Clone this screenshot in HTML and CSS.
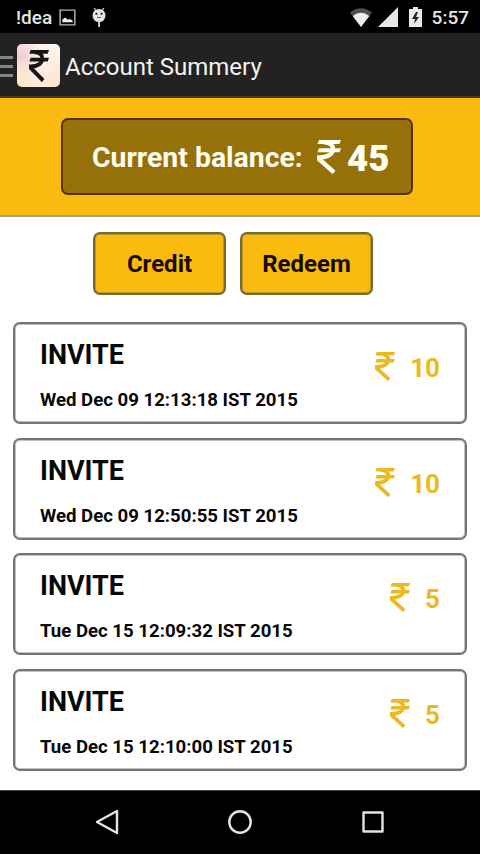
FILE: index.html
```html
<!DOCTYPE html>
<html lang="en">
<head>
<meta charset="utf-8">
<title>Account Summery</title>
<link rel="stylesheet" href="styles.css">
</head>
<body>
<svg class="defs" aria-hidden="true">
  <symbol id="rupee" viewBox="0 0 24 34" preserveAspectRatio="none">
    <path d="M2 0H24L22.5 4H0.5ZM2 8.3H24L22.5 12.3H0.5Z"/>
    <path d="M6 2C20 2 20 17.5 2 17.5V19L17 32.5" fill="none" stroke="currentColor" stroke-width="4.4"/>
  </symbol>
</svg>
<div class="screen">
  <div class="status">
    <span class="carrier">!dea</span>
    <svg class="photo" viewBox="0 0 18 18"><path d="M1.2 1.2h15.6v15.6H1.2z" fill="none" stroke="#b5b5b5" stroke-width="1.5"/><path d="M3.5 14V11l3-2 3 2.5 2-1 3 2V14z" fill="#eee"/></svg>
    <svg class="bug" viewBox="0 0 16 22"><path d="M3 1l2 3M13 1l-2 3" stroke="#ddd" stroke-width="1.2"/><ellipse cx="8" cy="9" rx="6.8" ry="7" fill="#e4e4e4"/><path d="M7.2 15h1.8v6H7.2z" fill="#ddd"/><circle cx="5.3" cy="7" r="1.1"/><circle cx="10.7" cy="7" r="1.1"/><path d="M6 11h4" stroke="#555"/></svg>
    <span class="spacer"></span>
    <svg class="wifi" viewBox="0 0 22 19"><path d="M0 4.5Q11-4 22 4.5L11 19Z" fill="#505050"/><path d="M2.7 8Q11 1.5 19.3 8L11 19Z" fill="#eee"/></svg>
    <svg class="signal" viewBox="0 0 20 20"><path d="M20 0V20H0Z" fill="#e8e8e8"/></svg>
    <svg class="battery" viewBox="0 0 13 20"><path d="M4 0h5v2h4v18H0V2h4z" fill="#e8e8e8"/><path d="M7 5L3 12h3l-1 5 5-7H7l2-5z" fill="#222"/></svg>
    <span class="time">5:57</span>
  </div>
  <header class="bar">
    <div class="menu"><i></i><i></i><i></i></div>
    <div class="logo"><svg><use href="#rupee"/></svg></div>
    <h1>Account Summery</h1>
  </header>
  <section class="hero">
    <div class="balance"><span>Current balance:</span><svg><use href="#rupee"/></svg><strong>45</strong></div>
  </section>
  <div class="actions"><button>Credit</button><button>Redeem</button></div>
  <main class="list">
    <article class="card"><div><h2>INVITE</h2><p>Wed Dec 09 12:13:18 IST 2015</p></div><div class="amount"><svg><use href="#rupee"/></svg><span>10</span></div></article>
    <article class="card"><div><h2>INVITE</h2><p>Wed Dec 09 12:50:55 IST 2015</p></div><div class="amount"><svg><use href="#rupee"/></svg><span>10</span></div></article>
    <article class="card"><div><h2>INVITE</h2><p>Tue Dec 15 12:09:32 IST 2015</p></div><div class="amount"><svg><use href="#rupee"/></svg><span>5</span></div></article>
    <article class="card"><div><h2>INVITE</h2><p>Tue Dec 15 12:10:00 IST 2015</p></div><div class="amount"><svg><use href="#rupee"/></svg><span>5</span></div></article>
  </main>
  <nav class="nav">
    <svg viewBox="0 0 26 26"><path d="M23 2v22L3 13z"/></svg>
    <svg viewBox="0 0 26 26"><circle cx="13" cy="13" r="10.7"/></svg>
    <svg viewBox="0 0 26 26"><path d="M3.5 3.5h19v19h-19z"/></svg>
  </nav>
</div>
</body>
</html>
```
FILE: styles.css
```css
* { box-sizing: border-box; margin: 0; padding: 0; }
body { font-family: Roboto, "Liberation Sans", sans-serif; background: #fff; }
svg { display: block; flex: none; fill: currentColor; }
.defs { display: none; }
.screen { width: 480px; height: 854px; display: flex; flex-direction: column; overflow: hidden; }
.status { height: 33px; flex: none; background: #000; color: #e4e4e4; display: flex; align-items: center; padding: 1px 11px 0 16px; font-size: 19px; }
.carrier { width: 43px; font-weight: 500; }
.status svg { color: #000; }
.photo { width: 17px; height: 17px; }
.bug { width: 16px; height: 21px; margin-left: 15px; }
.spacer { flex: 1; }
.wifi { width: 22px; height: 19px; }
.signal { width: 20px; height: 20px; margin-left: 6px; }
.battery { width: 13px; height: 20px; margin: 0 10px 0 11px; }
.time { font-weight: 500; }
.bar { height: 65px; flex: none; background: #222; border-bottom: 2px solid #503710; display: flex; align-items: center; padding-top: 2px; color: #f2f2f2; }
.menu { width: 13px; display: grid; gap: 6px; margin: 2px 4px 0 0; }
.menu i { height: 3px; background: #858585; }
.logo { width: 43px; height: 43px; border-radius: 5px; background: radial-gradient(circle at 10% 85%, #ffe5c8, transparent 45%), radial-gradient(circle at 5% 30%, #f0c9d0, transparent 50%), radial-gradient(circle at 100% 100%, #ffe0cc, #fff5ef 65%); color: #161616; display: grid; place-items: center; }
.logo svg { width: 20px; height: 32px; }
h1 { font-weight: 400; font-size: 24px; margin: 2px 0 0 5px; white-space: nowrap; }
.hero { height: 119px; flex: none; background: #fabb11; border-bottom: 2px solid #a89b80; padding: 20px 67px 0 61px; }
.balance { height: 77px; border: 2px solid #56330b; border-radius: 7px; background: #967009; color: #fffdf0; display: flex; align-items: center; padding: 1px 0 0 29px; font-size: 28.4px; font-weight: 700; white-space: nowrap; }
.balance span { width: 225px; }
.balance svg { width: 24px; height: 34px; margin-top: -1px; }
.balance strong { font-size: 36.5px; margin: 2px 0 0 6px; }
.actions { display: flex; gap: 14px; padding: 15px 0 0 93px; height: 105px; flex: none; }
button { width: 133px; height: 63px; border: 2px solid #7b682f; box-shadow: inset 0 0 0 1px #7b682f70; border-radius: 7px; background: #fabb11; color: #170a00; font: 700 24px Roboto, sans-serif; }
.list { flex: 1; display: flex; flex-direction: column; gap: 13.67px; padding: 0 13px; }
.card { height: 102px; flex: none; border: 2px solid #747474; box-shadow: inset 0 0 0 1px #74747470; border-radius: 7px; display: flex; justify-content: space-between; padding: 15px 25px 0; color: #080808; }
h2 { font-size: 27px; line-height: 32px; font-weight: 700; }
p { font-size: 18.6px; line-height: 22px; margin-top: 18px; font-weight: 700; white-space: nowrap; }
.amount { display: flex; align-items: center; height: 58px; color: #ecb91f; font-size: 26px; font-weight: 700; }
.amount svg { width: 20px; height: 29px; margin: -3px 15px 0 0; }
.nav { height: 64px; flex: none; background: #000; border-top: 1px solid #444; display: flex; justify-content: center; align-items: center; gap: 107px; padding-bottom: 2px; }
.nav svg { width: 26px; height: 26px; fill: none; stroke: #e4e4e4; stroke-width: 2.4; stroke-linejoin: round; }
```
